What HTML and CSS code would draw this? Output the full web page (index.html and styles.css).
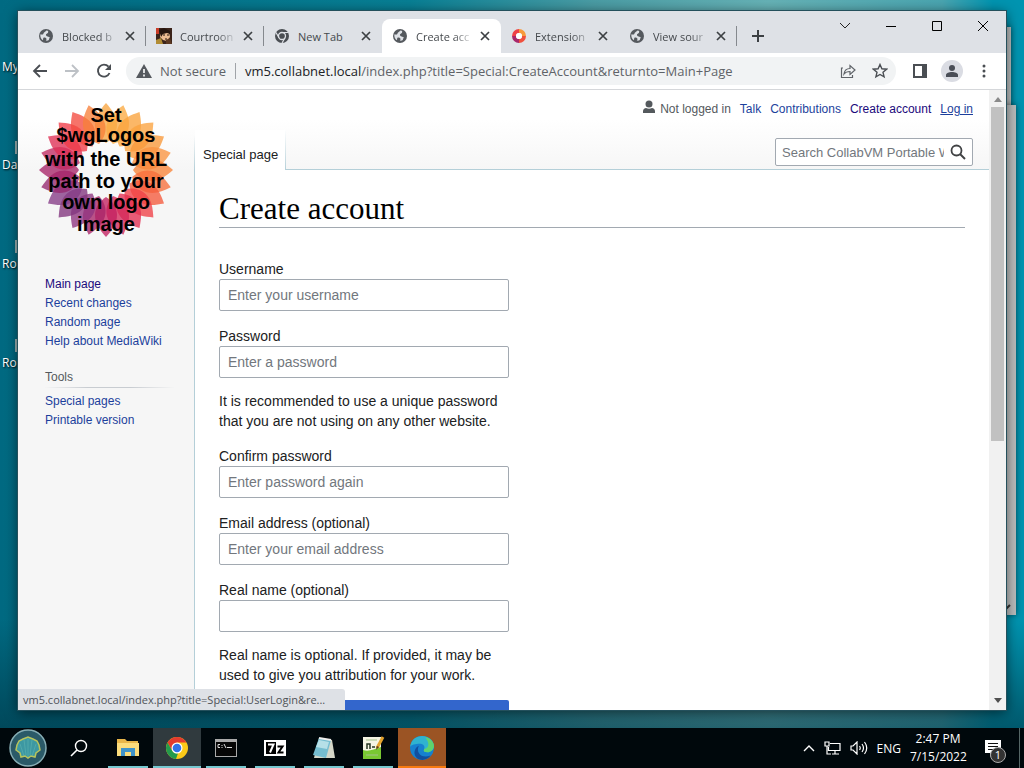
FILE: index.html
```
<!DOCTYPE html>
<html lang="en">
<head>
  <meta charset="UTF-8">
  <meta name="viewport" content="width=device-width, initial-scale=1">
  <title>Create account</title>
  <link rel="stylesheet" href="styles.css">
</head>
<body>

  <!-- shared icons -->
  <svg class="defs" width="0" height="0">
    <symbol id="globe" viewBox="0 0 16 16">
      <circle cx="8" cy="8" r="7" fill="#55595e"/>
      <path d="M8.8 2.6c-1 .3-1.300 1.200-2.400 1.600-1 .4-.6 1.700-1.600 2.200-.8.300-1.700.2-2.400-.2-.5 2.400.6 4.800 2.600 6 .2-1-.1-2 .8-2.600.8-.4 2 .1 2.500.9.500.7 0 1.500-.5 2 1 .3 2.200.100 3.100-.4-.2-1.200.6-1.800 1.300-2.500-.9-.2-1.500-1.100-2.500-1.200-1.100-.1-1.900-.8-1.700-1.900.2-.9 1.300-.9 1.900-1.500.4-.6.1-1.300.3-1.900z" fill="#dee1e6"/>
    </symbol>
    <symbol id="close" viewBox="0 0 10 10">
      <path d="M1 1l8 8M9 1L1 9" stroke="#3c4043" stroke-width="1.700" fill="none"/>
    </symbol>
    <path id="petal" d="M0 -67C6 -60 11 -54 11 -45C11 -37 6 -31 0 -27C-6 -31 -11 -37 -11 -45C-11 -54 -6 -60 0 -67Z"/>
  </svg>

  <div class="desktop">
    <span class="desktop-icon my">My</span>
    <span class="desktop-icon da">Da</span>
    <span class="desktop-icon ro">Ro</span>
    <span class="desktop-icon rb">Ro</span>

    <!-- windows behind the browser -->
    <div class="back-window upper"></div>
    <div class="back-window lower">
      <svg class="resize" width="8" height="8" viewBox="0 0 8 8"><path d="M0 6l4-4" stroke="#333" stroke-width="2"/></svg>
    </div>

    <div class="browser">
      <div class="tab-strip">
        <div class="tab"><svg width="16" height="16"><use href="#globe"/></svg><span class="tab-title">Blocked b</span><button class="tab-close" aria-label="Close tab"><svg width="10" height="10"><use href="#close"/></svg></button></div>
        <div class="tab">
          <svg width="16" height="16" viewBox="0 0 16 16"><path fill="#3b241b" d="M0 0h16v16H0z"/><path fill="#c93c28" d="M0 0h3v6H0z"/><path fill="#edbd93" d="M4 5l3-2 6 1 1 5-3 4-4-1-3-3z"/><path fill="#26150f" d="M3 2l5-2 6 3v3l-3-1-4 1-2 3z"/><path fill="#b28d35" d="M0 12l5-2 2 6H0z"/><path fill="#5c3922" d="M10 12l4-2 2 6h-6z"/><path stroke="#26150f" d="M7 7h2m2 0h2M9 11h2"/></svg>
          <span class="tab-title">Courtroon</span><button class="tab-close" aria-label="Close tab"><svg width="10" height="10"><use href="#close"/></svg></button></div>
        <div class="tab no-line">
          <svg width="16" height="16" viewBox="0 0 16 16"><circle cx="8" cy="8" r="7" fill="#4a4e53"/><circle cx="8" cy="8" r="3.500" fill="#4a4e53" stroke="#dee1e6" stroke-width="1.300"/><path d="M8 4.500h6.200M5 9.800L2 4.500M11 9.800L8 15" stroke="#dee1e6" stroke-width="1.200"/></svg>
          <span class="tab-title short">New Tab</span><button class="tab-close" aria-label="Close tab"><svg width="10" height="10"><use href="#close"/></svg></button></div>
        <div class="tab active"><svg width="16" height="16"><use href="#globe"/></svg><span class="tab-title">Create acc</span><button class="tab-close" aria-label="Close tab"><svg width="10" height="10"><use href="#close"/></svg></button></div>
        <div class="tab">
          <svg width="16" height="16" viewBox="0 0 16 16"><g fill="none" stroke-width="4"><path d="M8 3a5 5 0 0 1 5 5" stroke="#f79a3c"/><path d="M13 8a5 5 0 0 1-5 5" stroke="#f0503e"/><path d="M8 13a5 5 0 0 1-5-5" stroke="#a8286b"/><path d="M3 8a5 5 0 0 1 5-5" stroke="#ee4146"/></g><circle cx="8" cy="8" r="3" fill="#fff"/></svg>
          <span class="tab-title">Extension</span><button class="tab-close" aria-label="Close tab"><svg width="10" height="10"><use href="#close"/></svg></button></div>
        <div class="tab"><svg width="16" height="16"><use href="#globe"/></svg><span class="tab-title">View sour</span><button class="tab-close" aria-label="Close tab"><svg width="10" height="10"><use href="#close"/></svg></button></div>
        <button class="new-tab" aria-label="New tab"><svg width="12" height="12" viewBox="0 0 12 12"><path d="M6 0v12M0 6h12" stroke="#3c4043" stroke-width="2"/></svg></button>
        <div class="window-buttons">
          <button aria-label="Search tabs"><svg width="12" height="12" viewBox="0 0 12 12"><path d="M1 3l5 5 5-5" fill="none" stroke="#222"/></svg></button>
          <button aria-label="Minimize"><svg width="12" height="12" viewBox="0 0 12 12"><path d="M1 6.500h10" stroke="#000"/></svg></button>
          <button aria-label="Maximize"><svg width="12" height="12" viewBox="0 0 12 12"><path d="M1.500 1.500h9v9h-9z" fill="none" stroke="#000"/></svg></button>
          <button aria-label="Close"><svg width="12" height="12" viewBox="0 0 12 12"><path d="M1 1l10 10M11 1L1 11" stroke="#000"/></svg></button>
        </div>
      </div>

      <div class="toolbar">
        <button aria-label="Back"><svg width="16" height="16" viewBox="0 0 16 16"><path d="M15 8H2M8 2L2 8l6 6" fill="none" stroke="#4a4e53" stroke-width="1.800"/></svg></button>
        <button aria-label="Forward"><svg width="16" height="16" viewBox="0 0 16 16"><path d="M1 8h13M8 2l6 6-6 6" fill="none" stroke="#bdc1c6" stroke-width="1.800"/></svg></button>
        <button aria-label="Reload"><svg width="16" height="16" viewBox="0 0 16 16"><path d="M13.500 10a6 6 0 1 1-1-6.300" fill="none" stroke="#4a4e53" stroke-width="1.900"/><path d="M15 1v6H9z" fill="#4a4e53"/></svg></button>
        <div class="omnibox">
          <svg width="16" height="14" viewBox="0 0 16 14"><path d="M8 0l8 14H0z" fill="#55595e"/><path d="M8 5v4M8 10.500v2" stroke="#fff" stroke-width="1.600"/></svg>
          <span class="not-secure">Not secure</span>
          <span class="url"><b>vm5.collabnet.local</b>/index.php?title=Special:CreateAccount&amp;returnto=Main+Page</span>
          <button aria-label="Share"><svg width="16" height="16" viewBox="0 0 16 16"><path d="M3 5H1.500v9.500h11V12M4 11c.5-4 2.500-5.500 6-5.500V2.500L15 7l-5 4.500V8.500C7.500 8.500 5.500 9 4 11z" fill="none" stroke="#5f6368" stroke-width="1.200"/></svg></button>
          <button aria-label="Bookmark"><svg width="16" height="16" viewBox="0 0 16 16"><path d="M8 1.500l1.900 4.300 4.700.4-3.600 3.100 1.100 4.600L8 11.500l-4.100 2.400L5 9.300 1.400 6.200l4.700-.4z" fill="none" stroke="#4a4e53" stroke-width="1.400"/></svg></button>
        </div>
        <button aria-label="Side panel"><svg width="14" height="14" viewBox="0 0 14 14"><path d="M1 1h12v12H1z" fill="none" stroke="#4a4e53" stroke-width="2"/><path d="M9 1h4v12H9z" fill="#4a4e53"/></svg></button>
        <button class="profile" aria-label="Profile"><svg width="14" height="14" viewBox="0 0 14 14" fill="#4a4e57"><circle cx="7" cy="4" r="3"/><path d="M1 13v-2c0-2 3-3 6-3s6 1 6 3v2z"/></svg></button>
        <button aria-label="Menu"><svg width="16" height="16" viewBox="0 0 16 16" fill="#4a4e53"><circle cx="8" cy="3" r="1.500"/><circle cx="8" cy="8" r="1.500"/><circle cx="8" cy="13" r="1.500"/></svg></button>
      </div>

      <div class="viewport">
        <div class="page">
          <nav class="sidebar">
            <a class="logo" href="#" aria-label="Visit the main page">
              <svg width="160" height="160" viewBox="-80 -80 160 160">
                <g fill-opacity=".78">
                  <use href="#petal" fill="#f9a540"/>
                  <use href="#petal" transform="rotate(15)" fill="#fbab42"/>
                  <use href="#petal" transform="rotate(30)" fill="#faa33c"/>
                  <use href="#petal" transform="rotate(45)" fill="#fba33f"/>
                  <use href="#petal" transform="rotate(60)" fill="#f9983a"/>
                  <use href="#petal" transform="rotate(75)" fill="#fa9440"/>
                  <use href="#petal" transform="rotate(90)" fill="#f98438"/>
                  <use href="#petal" transform="rotate(105)" fill="#f7703c"/>
                  <use href="#petal" transform="rotate(120)" fill="#f55a3c"/>
                  <use href="#petal" transform="rotate(135)" fill="#f04046"/>
                  <use href="#petal" transform="rotate(150)" fill="#e33052"/>
                  <use href="#petal" transform="rotate(165)" fill="#d3285a"/>
                  <use href="#petal" transform="rotate(180)" fill="#c32060"/>
                  <use href="#petal" transform="rotate(195)" fill="#a82468"/>
                  <use href="#petal" transform="rotate(210)" fill="#8e3480"/>
                  <use href="#petal" transform="rotate(225)" fill="#82357e"/>
                  <use href="#petal" transform="rotate(240)" fill="#853b87"/>
                  <use href="#petal" transform="rotate(255)" fill="#96286f"/>
                  <use href="#petal" transform="rotate(270)" fill="#a82468"/>
                  <use href="#petal" transform="rotate(285)" fill="#c02a62"/>
                  <use href="#petal" transform="rotate(300)" fill="#df2f55"/>
                  <use href="#petal" transform="rotate(315)" fill="#ef3b48"/>
                  <use href="#petal" transform="rotate(330)" fill="#f44b40"/>
                  <use href="#petal" transform="rotate(345)" fill="#f7803a"/>
                </g>
                <g class="logo-text" text-anchor="middle">
                  <text x="0" y="-48">Set</text>
                  <text x="0" y="-28">$wgLogos</text>
                  <text x="0" y="-4">with the URL</text>
                  <text x="0" y="18">path to your</text>
                  <text x="0" y="39">own logo</text>
                  <text x="0" y="61">image</text>
                </g>
              </svg>
            </a>
            <ul>
              <li><a class="visited" href="#">Main page</a></li>
              <li><a href="#">Recent changes</a></li>
              <li><a href="#">Random page</a></li>
              <li><a href="#">Help about MediaWiki</a></li>
            </ul>
            <h3>Tools</h3>
            <ul>
              <li><a href="#">Special pages</a></li>
              <li><a href="#">Printable version</a></li>
            </ul>
          </nav>

          <div class="main">
            <header class="head">
              <div class="personal">
                <span class="anon"><svg width="12" height="14" viewBox="0 0 12 14" fill="#54595d"><circle cx="6" cy="4" r="3.500"/><path d="M0 13v-2c0-2 2-3 3-3 2 1 4 1 6 0 1 0 3 1 3 3v2z"/></svg>Not logged in</span>
                <a href="#">Talk</a>
                <a href="#">Contributions</a>
                <a class="visited" href="#">Create account</a>
                <a class="hover" href="#">Log in</a>
              </div>
              <div class="head-row">
                <a class="page-tab" href="#">Special page</a>
                <form class="search">
                  <input type="text" aria-label="Search" placeholder="Search CollabVM Portable Wiki">
                  <button type="button" aria-label="Go"><svg width="16" height="16" viewBox="0 0 16 16"><circle cx="6.500" cy="6.500" r="5" fill="none" stroke="#404244" stroke-width="1.800"/><path d="M10 10l5 5" stroke="#404244" stroke-width="2"/></svg></button>
                </form>
              </div>
            </header>

            <div class="content">
              <h1>Create account</h1>
              <form class="account-form">
                <div class="field">
                  <label for="username">Username</label>
                  <input type="text" id="username" placeholder="Enter your username">
                </div>
                <div class="field">
                  <label for="password">Password</label>
                  <input type="password" id="password" placeholder="Enter a password">
                  <p>It is recommended to use a unique password that you are not using on any other website.</p>
                </div>
                <div class="field">
                  <label for="confirm">Confirm password</label>
                  <input type="password" id="confirm" placeholder="Enter password again">
                </div>
                <div class="field">
                  <label for="email">Email address (optional)</label>
                  <input type="email" id="email" placeholder="Enter your email address">
                </div>
                <div class="field">
                  <label for="realname">Real name (optional)</label>
                  <input type="text" id="realname">
                  <p>Real name is optional. If provided, it may be used to give you attribution for your work.</p>
                </div>
                <button class="submit" type="button" aria-label="Create your account"></button>
              </form>
            </div>
          </div>
        </div>

        <div class="scrollbar">
          <svg width="8" height="5" viewBox="0 0 8 5"><path d="M4 0l4 5H0z" fill="#8a8a8a"/></svg>
          <div class="track"><div class="thumb"></div></div>
          <svg width="8" height="5" viewBox="0 0 8 5"><path d="M0 0h8L4 5z" fill="#505050"/></svg>
        </div>
        <div class="status">vm5.collabnet.local/index.php?title=Special:UserLogin&amp;re...</div>
      </div>
    </div>
  </div>

  <div class="taskbar">
    <button class="start" aria-label="Start"><svg width="38" height="38" viewBox="0 0 38 38"><circle cx="19" cy="19" r="18" fill="#2b5a68" stroke="#87aeb5" stroke-width="1.500"/><path d="M12 28l-1-4-4-3 1-5 2-4 4-2 5-2 5 2 4 2 2 4 1 5-4 3-1 4-4-1-3 2-3-2z" fill="#3d98a2" stroke="#b8c45c" stroke-width="1.500"/><path d="M15 27l-4-12M17 26l-2-15M19 28V10M21 26l2-15M23 27l4-12" stroke="#63b9b4" stroke-width="1" opacity=".5"/></svg></button>
    <button class="task" aria-label="Search"><svg width="18" height="18" viewBox="0 0 18 18"><circle cx="11" cy="7" r="5.500" fill="none" stroke="#fff" stroke-width="1.400"/><path d="M7 11l-6 6" stroke="#fff" stroke-width="1.600"/></svg></button>
    <button class="task open" aria-label="File Explorer"><svg width="22" height="20" viewBox="0 0 22 20"><path d="M0 1h8l2 2h11v15H0z" fill="#e8b64a"/><path d="M0 5h22v13H0z" fill="#fbdc7c"/><path d="M4 10h14v8h-4v-4H8v4H4z" fill="#3f93c9"/></svg></button>
    <button class="task open current" aria-label="Chrome"><svg width="24" height="24" viewBox="0 0 24 24"><circle cx="12" cy="12" r="11" fill="#fbc918"/><path d="M2.500 6.500A11 11 0 0 1 21.500 6.500H12L7.200 14.700z" fill="#e33b2e"/><path d="M2.500 6.500l4.700 8.300A5.500 5.500 0 0 0 13 17.300L11 23A11 11 0 0 1 2.500 6.500z" fill="#249a4c"/><circle cx="12" cy="12" r="5.500" fill="#fff"/><circle cx="12" cy="12" r="4.300" fill="#3273e8"/></svg></button>
    <button class="task open" aria-label="Command Prompt"><svg width="22" height="18" viewBox="0 0 22 18"><path d="M0 0h22v18H0z" fill="#aaa"/><path d="M1 3h20v14H1z" fill="#060606"/><path d="M5 5.500H3v3h2M7 6v1M7 8v1M9 5l2 4M12 8.500h5" stroke="#ddd" fill="none"/></svg></button>
    <button class="task open" aria-label="7-Zip"><svg width="22" height="16" viewBox="0 0 22 16"><path d="M0 0h22v16H0z" fill="#fff"/><path d="M2 2h10v12H2z"/><path d="M4 4.500h5.500L6 12.500" stroke="#fff" stroke-width="2" fill="none"/><path d="M13.500 6.500h5l-4 6h5" stroke="#000" stroke-width="2" fill="none"/></svg></button>
    <button class="task open" aria-label="Notepad"><svg width="24" height="24" viewBox="0 0 24 24"><path d="M7 2l13 2 3 18H2z" fill="#d5d7c9"/><path d="M7 2l12 2-5 18L1 19z" fill="#75bdd0"/><path d="M7 4l10 2-2 7-11-2z" fill="#b6e0e8"/><path d="M7 2l12 2" stroke="#eee" stroke-width="2"/></svg></button>
    <button class="task open" aria-label="Notepad++"><svg width="24" height="24" viewBox="0 0 24 24"><path d="M2 1h18v22H2z" fill="#f4f4e4"/><path d="M2 14c6 2 11-1 18-3v12H2z" fill="#79c832"/><path d="M5 4h11M5 19h12" stroke="#a4c18b"/><path d="M6 13V8h3v5M11 11h3m1 0h3" stroke="#243421" stroke-width="1.500" fill="none"/><path d="M22 1l-6 11" stroke="#e3a32d" stroke-width="3"/><path d="M16 10l-1 4 3-3z" fill="#543c20"/></svg></button>
    <button class="task alert" aria-label="Edge"><svg width="26" height="26" viewBox="0 0 24 24"><circle cx="12" cy="12" r="11" fill="#1681cf"/><path d="M1 11C2 4 7 1 12 1c7 0 11 5 11 9 0 4-3 6-6 6-3 0-4-1-3-3 1-3-1-5-4-5-4 0-8 1-9 3z" fill="#2fb3cf"/><path d="M15 2c5 1 8 5 8 8 0 4-3 6-6 6-3 0-4-1-3-3 5-1 5-6 1-11z" fill="#5fd36c"/><path d="M9 10c-3 7 3 12 11 9-3 4-8 5-12 3-5-4-3-10 1-12z" fill="#114f9e"/></svg></button>

    <div class="tray">
      <svg width="12" height="8" viewBox="0 0 12 8"><path d="M1 7l5-5 5 5" fill="none" stroke="#fff" stroke-width="1.400"/></svg>
      <svg width="17" height="14" viewBox="0 0 17 14"><path d="M6 2.500h10v7H4.500V6M8 13h7M11 10v3M1 1h4v4H1zM3 5v8h4" fill="none" stroke="#fff" stroke-width="1.200"/></svg>
      <svg width="18" height="14" viewBox="0 0 18 14"><path d="M1 5h2l4-4v12L3 9H1zM9.500 5q1.500 2 0 4M12 3q3 4 0 8M14.500 1q4.500 6 0 12" fill="none" stroke="#fff" stroke-width="1.200"/></svg>
      <span>ENG</span>
      <div class="clock"><span>2:47 PM</span><span>7/15/2022</span></div>
    </div>
    <button class="notify" aria-label="Notifications"><svg width="16" height="17" viewBox="0 0 16 17"><path d="M0 0h16v13H8l-3 4v-4H0z" fill="#fff"/><path d="M3 3.500h10M3 6.500h10M3 9.500h6" stroke="#111"/></svg><span class="badge">1</span></button>
  </div>

</body>
</html>
```
FILE: styles.css
```
* {
  box-sizing: border-box;
}
body {
  margin: 0;
  height: 100vh;
  display: flex;
  flex-direction: column;
  overflow: hidden;
  font-family: "Liberation Sans", Arial, sans-serif;
  font-size: 14px;
  color: #202122;
}
button {
  display: flex;
  align-items: center;
  justify-content: center;
  padding: 0;
  border: none;
  background: none;
}
a {
  color: #1c3f9c;
  text-decoration: none;
}
svg {
  flex: none;
}
.defs {
  position: absolute;
}

/* desktop */
.desktop {
  position: relative;
  flex: 1;
  background: linear-gradient(to bottom, transparent 85%, rgba(0, 50, 65, 0.6)), linear-gradient(to right, #006a82, #087f94 40%, #4a9ca4 58%, #66b2b6 75%, #4aa5b0 92%, #0094b0 97%);
}
.desktop-icon {
  position: absolute;
  left: 2px;
  font: 12px "Open Sans", sans-serif;
  color: #fff;
  text-shadow: 1px 1px 2px #000;
}
.my {
  top: 58px;
}
.da {
  top: 156px;
}
.ro {
  top: 255px;
}
.rb {
  top: 354px;
}
/* right edge of the icon above its label */
.da::before,
.ro::before,
.rb::before {
  content: "";
  position: absolute;
  left: 13px;
  top: -15px;
  width: 3px;
  height: 13px;
  background: #9fb5b5;
}
.back-window {
  position: absolute;
  background: #b9bcbc;
  box-shadow: 0 0 6px rgba(0, 0, 0, 0.5);
}
.upper {
  top: 27px;
  right: 13px;
  width: 100px;
  height: 200px;
}
.lower {
  top: 105px;
  right: 8px;
  width: 100px;
  bottom: 113px;
}
.resize {
  position: absolute;
  right: 2px;
  bottom: 4px;
}
.browser {
  position: absolute;
  top: 11px;
  left: 18px;
  right: 18px;
  bottom: 18px;
  display: flex;
  flex-direction: column;
  background: #fff;
  box-shadow: 0 0 0 1px #24505c, 0 2px 12px rgba(0, 0, 0, 0.6);
}

/* tabs */
.tab-strip {
  display: flex;
  height: 42px;
  padding: 8px 0 0 10px;
  background: #dee1e6;
}
.tab {
  display: flex;
  align-items: center;
  width: 118px;
  padding: 0 7px 0 10px;
  background: linear-gradient(#85898e, #85898e) right center / 1px 20px no-repeat;
  font: 11px "Open Sans", "Segoe UI", sans-serif;
  color: #45494d;
}
.tab.no-line {
  background: none;
}
.tab.active {
  width: 119px;
  background: #fff;
  border-radius: 8px 8px 0 0;
}
.tab.active + .tab {
  background: none;
}
.tab-title {
  flex: 1;
  margin: 0 2px 0 8px;
  white-space: nowrap;
  -webkit-mask-image: linear-gradient(to right, #000 65%, transparent);
  mask-image: linear-gradient(to right, #000 65%, transparent);
}
.tab-title.short {
  -webkit-mask-image: none;
  mask-image: none;
}
.tab-close {
  width: 18px;
  height: 18px;
}
.new-tab {
  width: 42px;
}
.window-buttons {
  display: flex;
  margin: -8px 0 0 auto;
}
.window-buttons button {
  width: 46px;
  height: 30px;
}

/* address bar */
.toolbar {
  display: flex;
  align-items: center;
  height: 37px;
  padding: 0 6px;
  border-bottom: 1px solid #d5d7da;
}
.toolbar button {
  width: 32px;
  height: 28px;
}
.omnibox {
  flex: 1;
  display: flex;
  align-items: center;
  height: 28px;
  margin: 0 8px 0 6px;
  padding: 0 0 0 10px;
  border-radius: 14px;
  background: #f1f3f4;
  font: 13px "Open Sans", "Segoe UI", sans-serif;
  color: #5f6368;
}
.not-secure {
  margin: 0 9px 0 8px;
  padding-right: 9px;
  border-right: 1px solid #a0a4a8;
  line-height: 16px;
}
.url {
  flex: 1;
  white-space: nowrap;
}
.url b {
  font-weight: normal;
  color: #202124;
}
.toolbar .profile {
  width: 22px;
  height: 22px;
  margin: 0 5px;
  border-radius: 50%;
  background: #dadce3;
}

/* wiki page */
.viewport {
  position: relative;
  flex: 1;
  min-height: 0;
  display: flex;
}
.page {
  flex: 1;
  display: flex;
  overflow: hidden;
  background: linear-gradient(#fff 30px, #f6f6f6 80px);
}
.sidebar {
  width: 176px;
  padding: 0 20px 0 8px;
  font-size: 12px;
  line-height: 19px;
}
.logo {
  display: block;
  margin-bottom: 25px;
}
.logo svg {
  display: block;
}
.logo-text {
  font: bold 20px "Liberation Sans", Arial, sans-serif;
  fill: #000;
}
.sidebar ul {
  margin: 0;
  padding: 0 0 0 19px;
  list-style: none;
}
.sidebar h3 {
  margin: 17px 0 4px 19px;
  border-bottom: 1px solid;
  border-image: linear-gradient(to right, transparent, #c8ccd1 33%, #c8ccd1 66%, transparent) 1;
  font-size: 12px;
  font-weight: normal;
  color: #54595d;
}
.main {
  flex: 1;
  display: flex;
  flex-direction: column;
  min-width: 0;
}
.head {
  flex: none;
  height: 79px;
  border-left: 1px solid;
  border-image: linear-gradient(transparent 45px, #b4cfd8) 1;
  display: flex;
  flex-direction: column;
}
.personal {
  display: flex;
  justify-content: flex-end;
  gap: 9px;
  padding: 10px 16px 0 0;
  font-size: 12px;
  line-height: 18px;
}
.anon {
  display: flex;
  gap: 5px;
  color: #54595d;
}
.sidebar .visited,
.personal .visited {
  color: #1b0a7c;
}
.hover {
  text-decoration: underline;
}
.head-row {
  flex: 1;
  display: flex;
  justify-content: space-between;
  margin-top: 12px;
}
/* covers the line under the header */
.page-tab {
  margin-bottom: -1px;
  z-index: 1;
  padding: 17px 7px 0 8px;
  border-right: 1px solid;
  border-image: linear-gradient(transparent, #b4cfd8) 1;
  background: #fff;
  font-size: 13px;
  color: #202122;
}
.search {
  display: flex;
  width: 198px;
  height: 28px;
  margin: 8px 16px 0 0;
  border: 1px solid #a2a9b1;
  border-radius: 2px;
  background: #fff;
}
.search input {
  flex: 1;
  min-width: 0;
  padding: 0 0 0 6px;
  border: none;
  outline: none;
  background: none;
  font: 13px "Liberation Sans", Arial, sans-serif;
}
.search button {
  width: 28px;
}
::placeholder {
  color: #72777d;
}
.content {
  flex: 1;
  padding: 20px 24px 0;
  border: solid #b4cfd8;
  border-width: 1px 0 0 1px;
  background: #fff;
}
h1 {
  margin: 0 0 31px;
  border-bottom: 1px solid #a2a9b1;
  font: 31px/37px "Liberation Serif", Georgia, serif;
  color: #000;
}
.account-form {
  display: flex;
  flex-direction: column;
  gap: 15px;
  width: 290px;
}
.field label {
  display: block;
  line-height: 20px;
}
.field input {
  display: block;
  width: 100%;
  height: 32px;
  padding: 0 8px;
  border: 1px solid #a2a9b1;
  border-radius: 2px;
  font: 14px "Liberation Sans", Arial, sans-serif;
}
.field p {
  margin: 13px 0 0;
  line-height: 20px;
}
.submit {
  height: 32px;
  border-radius: 2px;
  background: #36c;
}
.scrollbar {
  width: 17px;
  display: flex;
  flex-direction: column;
  align-items: center;
  padding: 7px 0;
  background: #f1f1f1;
}
.track {
  flex: 1;
  width: 13px;
  margin: 5px 0;
}
.thumb {
  height: 57%;
  background: #c1c1c1;
}
.status {
  position: absolute;
  left: 0;
  bottom: 0;
  width: 327px;
  padding: 0 5px;
  border-radius: 0 3px 0 0;
  background: #dee1e6;
  font: 11px/21px "Open Sans", "Segoe UI", sans-serif;
  color: #4f5358;
  white-space: nowrap;
}

/* taskbar */
.taskbar {
  display: flex;
  height: 40px;
  padding: 0 4px 0 1px;
  background: #00080c;
  font: 12px "Open Sans", "Segoe UI", sans-serif;
  color: #fff;
}
.start {
  width: 53px;
}
.task {
  width: 48px;
  margin-left: 1px;
}
.open {
  background: linear-gradient(#76c8d0, #76c8d0) center bottom / 40px 2px no-repeat;
}
.current {
  background: linear-gradient(#76c8d0, #76c8d0) center bottom / 48px 2px no-repeat #303a3e;
}
.alert {
  background: linear-gradient(#f77a10, #f77a10) center bottom / 48px 2px no-repeat #9b5424;
}
.tray {
  display: flex;
  align-items: center;
  gap: 9px;
  margin-left: auto;
}
.clock {
  display: flex;
  flex-direction: column;
  width: 56px;
  line-height: 18px;
  text-align: center;
}
.notify {
  position: relative;
  width: 54px;
  height: 40px;
  border-right: 1px solid #566;
}
.badge {
  position: absolute;
  right: 13px;
  bottom: 5px;
  width: 16px;
  border: 1px solid #aaa;
  border-radius: 50%;
  background: #333;
  font: 11px/14px "Open Sans", sans-serif;
  color: #fff;
}
```
